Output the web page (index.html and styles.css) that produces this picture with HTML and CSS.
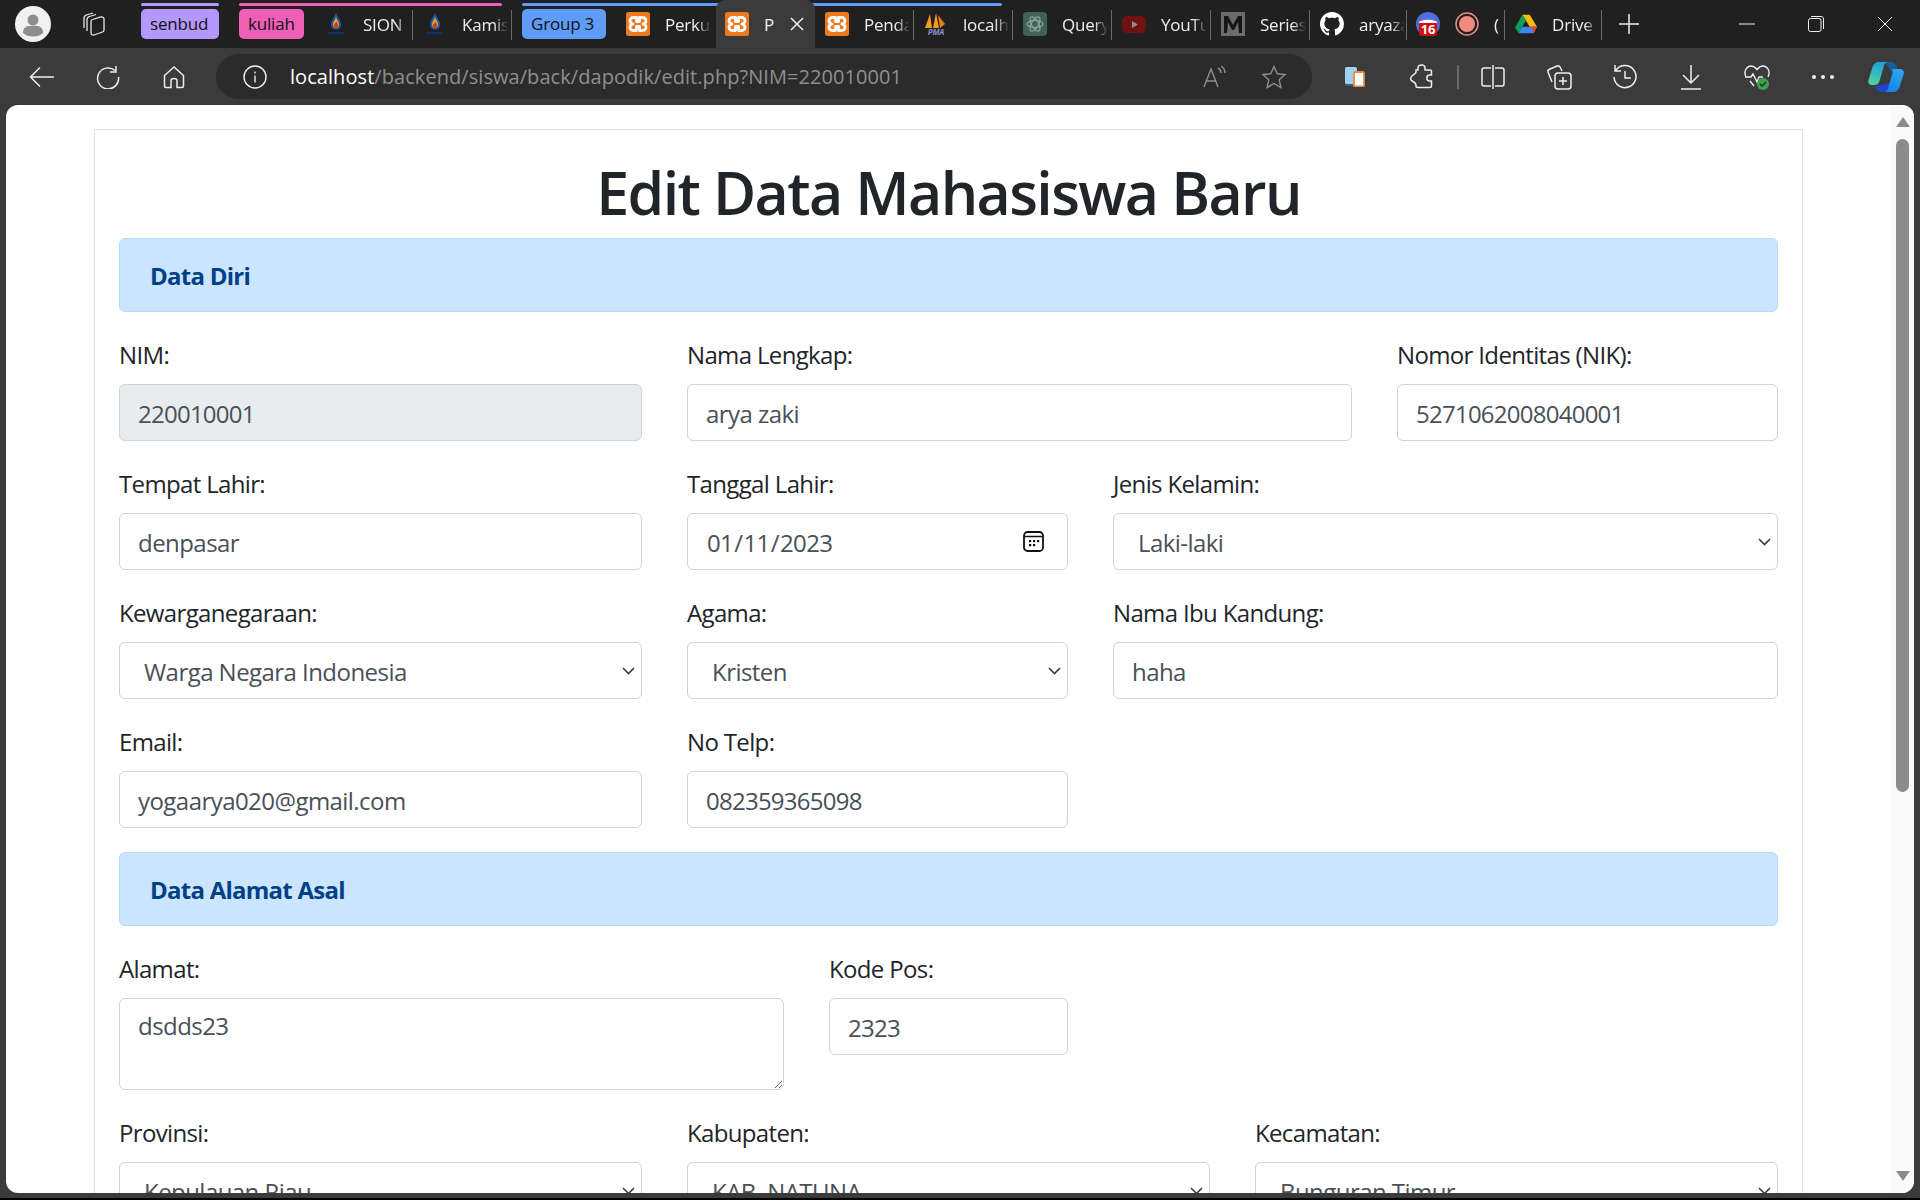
FILE: index.html
```html
<!DOCTYPE html>
<html lang="en">
<head>
    <meta charset="UTF-8">
    <meta name="viewport" content="width=device-width, initial-scale=1.0">
    <title>Edit Data Mahasiswa Baru</title>
    <link rel="stylesheet" href="styles.css">
</head>
<body>
    <svg class="defs" width="0" height="0">
        <symbol id="xampp" viewBox="0 0 24 24">
            <rect width="24" height="24" rx="2.500" fill="#ee7a1f"/>
            <g fill="none" stroke="#fff" stroke-width="2.800" stroke-linejoin="round">
                <path d="M10.500 5.500H7.500a3.200 3.200 0 0 0-.5 6.500 3.200 3.200 0 0 0 .5 6.500h3v-4h3v4h3a3.200 3.200 0 0 0 .5-6.500 3.200 3.200 0 0 0-.5-6.500h-3v4h-3z"/>
            </g>
        </symbol>
        <symbol id="flame" viewBox="0 0 24 24">
            <path d="M12 1c1 4 5 7 5 11.500 0 3-2 5-5 5s-5-2-5-5C7 8 11 5 12 1z" fill="#1f56ad"/>
            <path d="M12 5c.8 3 3 4.500 3 7.500 0 2-1.300 3.500-3 3.500s-3-1.500-3-3.500C9 9.500 11.400 8 12 5z" fill="#e9a21f"/>
            <path d="M12.500 9.500c.5 1.500 1.500 2.500 1.500 4 0 1.300-.9 2.500-2 2.500s-2-1.200-2-2.500c0-1.500 2-2.500 2.500-4z" fill="#c93a22"/>
            <rect x="4" y="20" width="16" height="2" fill="#14305f"/>
        </symbol>
    </svg>

    <div class="tabstrip">
        <div class="avatar">
            <svg viewBox="0 0 36 36" width="36" height="36"><circle cx="18" cy="18" r="18" fill="#f1f1f1"/><circle cx="18" cy="14" r="5.500" fill="#8d8d8d"/><path d="M8 27c0-5 3-7 6-7h8c3 0 6 2 6 7-2.500 2.500-6 3.500-10 3.500S10.500 29.500 8 27z" fill="#8d8d8d"/></svg>
        </div>
        <div class="workspaces">
            <svg viewBox="0 0 25 24" width="25" height="24" fill="none" stroke="#e8e8e8" stroke-width="1.300"><path d="M3 16V6c0-1.500 1-2.500 2.500-3L12 1M6 19V7.500C6 6 7 5 8.500 4.500L15 2.500"/><path d="M10 9.500c0-1 .6-1.700 1.500-2l8.500-2.500c1.500-.4 3 .5 3 2v11c0 1-.6 1.700-1.500 2l-8.500 3c-1.500.4-3-.5-3-2z"/></svg>
        </div>

        <div class="group group-purple">
            <span class="chip chip-purple">senbud</span>
        </div>

        <div class="group group-pink">
            <span class="chip chip-pink">kuliah</span>
            <div class="tab tab-sep"><svg class="fav" width="24" height="24"><use href="#flame"/></svg><span class="tab-title">SION</span></div>
            <div class="tab tab-sep"><svg class="fav" width="24" height="24"><use href="#flame"/></svg><span class="tab-title">Kamis</span></div>
        </div>

        <div class="group group-blue">
            <span class="chip chip-blue">Group 3</span>
            <div class="tab tab-plain"><svg class="fav" width="24" height="24"><use href="#xampp"/></svg><span class="tab-title">Perkuliahan</span></div>
            <div class="tab tab-active"><svg class="fav" width="24" height="24"><use href="#xampp"/></svg><span class="tab-title">P</span>
                <svg class="tab-close" viewBox="0 0 14 14" width="14" height="14" stroke="#fff" stroke-width="1.400"><path d="M1 1l12 12M13 1L1 13"/></svg>
            </div>
            <div class="tab tab-sep"><svg class="fav" width="24" height="24"><use href="#xampp"/></svg><span class="tab-title">Pendaftaran</span></div>
        </div>

        <div class="tab tab-sep">
            <svg class="fav" viewBox="0 0 24 24" width="24" height="24"><path d="M1 16L6 2l2 14zM9 16l3-15 3 15z" fill="#f39b1d"/><path d="M14 3l7 9-5 4z" fill="#e87f12"/><text x="12" y="23" class="pma">PMA</text></svg>
            <span class="tab-title">localhost</span>
        </div>
        <div class="tab tab-sep">
            <svg class="fav" viewBox="0 0 24 24" width="24" height="24"><rect width="24" height="24" rx="4" fill="#3f6157"/><g fill="none" stroke="#8ea59d" stroke-width="1.200"><ellipse cx="12" cy="12" rx="8" ry="3.600"/><ellipse cx="12" cy="12" rx="8" ry="3.600" transform="rotate(60 12 12)"/><ellipse cx="12" cy="12" rx="8" ry="3.600" transform="rotate(120 12 12)"/></g></svg>
            <span class="tab-title">Query Result</span>
        </div>
        <div class="tab tab-sep">
            <svg class="fav" viewBox="0 0 24 24" width="24" height="24"><rect y="4" width="24" height="17" rx="5" fill="#6e1212"/><path d="M10 9l6 3.500-6 3.500z" fill="#8f8f8f"/></svg>
            <span class="tab-title">YouTube</span>
        </div>
        <div class="tab tab-sep">
            <svg class="fav" viewBox="0 0 24 24" width="24" height="24"><rect width="24" height="24" fill="#6b6b6b"/><path d="M3 4h4l5 9 5-9h4v17h-3l-1-11-4 8h-2l-4-8-1 11H3z" fill="#161616"/></svg>
            <span class="tab-title">Series</span>
        </div>
        <div class="tab tab-sep tab-github">
            <svg class="fav" viewBox="0 0 16 16" width="24" height="24"><path fill="#fff" d="M8 0C3.580 0 0 3.580 0 8c0 3.540 2.290 6.530 5.470 7.590.4.07.55-.17.55-.38 0-.19-.01-.82-.01-1.490-2.010.37-2.530-.49-2.690-.94-.09-.23-.48-.94-.82-1.130-.28-.15-.68-.52-.01-.53.63-.01 1.080.58 1.230.82.72 1.210 1.870.87 2.330.66.07-.52.28-.87.51-1.070-1.780-.2-3.640-.89-3.640-3.950 0-.87.31-1.590.82-2.150-.08-.2-.36-1.020.08-2.120 0 0 .67-.21 2.200.82.64-.18 1.320-.27 2-.27.68 0 1.360.09 2 .27 1.530-1.040 2.200-.82 2.200-.82.44 1.100.16 1.920.08 2.120.51.56.82 1.270.82 2.150 0 3.070-1.870 3.750-3.650 3.950.29.25.54.73.54 1.480 0 1.070-.01 1.930-.01 2.200 0 .21.15.46.55.38A8.013 8.013 0 0016 8c0-4.420-3.580-8-8-8z"/></svg>
            <span class="tab-title">aryazaki</span>
        </div>
        <div class="tab-pair tab-sep">
            <svg class="fav" viewBox="0 0 24 24" width="24" height="24"><circle cx="12" cy="12" r="12" fill="#4f6fe0"/><rect x="3" y="8" width="18" height="16" rx="3" fill="#d40c0c"/><path d="M3 10c2-3 16-3 18 0v1H3z" fill="#fff"/><text x="12" y="22" class="badge-num">16</text></svg>
            <svg class="fav" viewBox="0 0 24 24" width="24" height="24"><circle cx="12" cy="12" r="11" fill="none" stroke="#ea8a80" stroke-width="1.500"/><circle cx="12" cy="12" r="8" fill="#f28b82"/></svg>
            <span class="tab-title tab-stub">(</span>
        </div>
        <div class="tab tab-sep tab-drive">
            <svg class="fav" viewBox="0 0 24 22" width="22" height="22"><path d="M8 1h8l8 13h-8z" fill="#fbbc04"/><path d="M8 1L0 15l4 6 8-14z" fill="#0f9d58"/><path d="M4 21h16l4-7H8z" fill="#4285f4"/><path d="M20 21l4-7h-6z" fill="#ea4335"/></svg>
            <span class="tab-title">Drive</span>
        </div>
        <svg class="new-tab" viewBox="0 0 22 22" width="22" height="22" stroke="#eee" stroke-width="1.500"><path d="M11 1v20M1 11h20"/></svg>

        <div class="win-controls">
            <svg viewBox="0 0 16 16" width="16" height="16" stroke="#eee" stroke-width="1"><path d="M0 8h16"/></svg>
            <svg viewBox="0 0 16 16" width="16" height="16" fill="none" stroke="#eee" stroke-width="1"><rect x=".5" y="2.500" width="12.500" height="13" rx="2"/><path d="M3 .5h10c1.500 0 2.500 1 2.500 2.500v10"/></svg>
            <svg viewBox="0 0 16 16" width="16" height="16" stroke="#eee" stroke-width="1"><path d="M1 1l14 14M15 1L1 15"/></svg>
        </div>
    </div>

    <div class="toolbar">
        <button class="tool"><svg viewBox="0 0 26 22" width="26" height="22" fill="none" stroke="#eee" stroke-width="1.500"><path d="M25 11H2M11 1.500L1.500 11l9.500 9.500"/></svg></button>
        <button class="tool"><svg viewBox="0 0 24 24" width="24" height="24" fill="none" stroke="#eee" stroke-width="1.500"><path d="M19 5.500A10.500 10.500 0 1 0 22.500 12M20 1v6h-6"/></svg></button>
        <button class="tool"><svg viewBox="0 0 24 24" width="24" height="24" fill="none" stroke="#eee" stroke-width="1.500"><path d="M12 2L2.500 10.500V21c0 1 .6 1.500 1.500 1.500h5v-7c0-1 1-2 3-2s3 1 3 2v7h5c1 0 1.500-.5 1.500-1.500V10.500z"/></svg></button>

        <div class="address">
            <svg class="info" viewBox="0 0 24 24" width="24" height="24" fill="none" stroke="#eee" stroke-width="1.400"><circle cx="12" cy="12" r="11"/><path d="M12 10.500v7M12 6.500v2"/></svg>
            <span class="url"><span class="url-host">localhost</span>/backend/siswa/back/dapodik/edit.php?NIM=220010001</span>
            <svg class="read" viewBox="0 0 26 24" width="26" height="24" fill="none" stroke="#8f8f8f" stroke-width="1.400"><path d="M2 22L9 4l7 18M4.500 16h9M16 3c2 1 3 3 3 5M19 1c2.500 1.500 4 4 4 7"/></svg>
            <svg class="star" viewBox="0 0 26 24" width="26" height="24" fill="none" stroke="#8f8f8f" stroke-width="1.400"><path d="M13 1.500l3.300 7.300 7.700.8-5.800 5.200 1.700 7.700-6.900-4-6.900 4 1.700-7.700L2 9.600l7.700-.8z"/></svg>
        </div>

        <button class="tool tool-first"><svg viewBox="0 0 20 20" width="20" height="20"><rect x="0" y="0" width="12" height="17" rx="1.500" fill="#9fd0f2"/><rect x="0" y="17" width="12" height="2" fill="#46586a"/><rect x="9" y="5" width="10" height="14.500" rx="1.500" fill="#fff" stroke="#e98c3a" stroke-width="1.800"/></svg></button>
        <button class="tool"><svg viewBox="0 0 24 26" width="24" height="26" fill="none" stroke="#eee" stroke-width="1.500"><path d="M9 4c0-4 7-4 7 0v2h5c1 0 1.500.5 1.500 1.500V11h-2c-3.500 0-3.500 6 0 6h2v5c0 1-.5 1.500-1.500 1.500H9c-1 0-2-.5-2-1.500v-1c0-3.500-5.500-3-5.500-6.500S7 11 7 8V6h2z"/></svg></button>
        <span class="tool-divider"></span>
        <button class="tool tool-tight"><svg viewBox="0 0 24 24" width="24" height="24" fill="none" stroke="#eee" stroke-width="1.500"><path d="M12 0v24M10 3H3C2 3 1 4 1 5v14c0 1 1 2 2 2h7M14 3h7c1 0 2 1 2 2v14c0 1-1 2-2 2h-7"/></svg></button>
        <button class="tool"><svg viewBox="0 0 26 26" width="26" height="26" fill="none" stroke="#eee" stroke-width="1.500"><path d="M6 18L2 8c-.4-1 0-2 1-2.500L11 2c1-.4 2 0 3 1l2 4"/><rect x="9" y="9" width="16" height="16" rx="3"/><path d="M17 13v8M13 17h8"/></svg></button>
        <button class="tool"><svg viewBox="0 0 26 26" width="26" height="26" fill="none" stroke="#eee" stroke-width="1.500"><path d="M3.500 7A11 11 0 1 1 2 13M3 1v6h6M13 7v7h6"/></svg></button>
        <button class="tool"><svg viewBox="0 0 22 26" width="22" height="26" fill="none" stroke="#eee" stroke-width="1.500"><path d="M11 1v17M3 11l8 8 8-8M1 25h20"/></svg></button>
        <button class="tool"><svg viewBox="0 0 26 26" width="26" height="26" fill="none"><path d="M2 13C-1 7 3 2 7 2c2.500 0 4.500 1.500 6 3.500C14.500 3.500 16.500 2 19 2c4 0 8 5 5 11M1 13h6l2-3 4 8 2-5h4M6 17l4 5" stroke="#eee" stroke-width="1.400"/><circle cx="19" cy="20" r="6" fill="#3f9f4c"/><path d="M16 20l2 2 4-4" stroke="#15301a" stroke-width="1.300"/></svg></button>
        <button class="tool"><span class="dots"><i></i><i></i><i></i></span></button>
        <button class="tool tool-copilot">
            <svg viewBox="0 0 36 32" width="36" height="32">
                <defs>
                    <linearGradient id="copLeft" x1="0.600" y1="0" x2="0.300" y2="1"><stop offset="0" stop-color="#1f9fe6"/><stop offset="1" stop-color="#4fd49a"/></linearGradient>
                    <linearGradient id="copRight" x1="0.700" y1="0" x2="0.300" y2="1"><stop offset="0" stop-color="#2ea6f2"/><stop offset="1" stop-color="#1583e8"/></linearGradient>
                </defs>
                <path d="M17 1h6c3 0 5 2 6 6l2 7-8-3z" fill="#17608f"/>
                <path d="M6 26l6 5h10c3 0 5-2 6-5l2-6z" fill="#1f45cf"/>
                <path d="M11 1h9c-2 0-3.500 1.500-4 3.500L11.500 20c-.7 2.500-2.500 4-5 4H4c-3 0-4.500-2.500-3.500-5l4-13C5.500 3 8 1 11 1z" fill="url(#copLeft)"/>
                <path d="M24 8h8c3 0 4.500 2.500 3.500 5.500l-4 12.500c-1 3-3.500 5-6.500 5h-9c2 0 3.500-1.500 4-3.500L24.500 12c.5-2 0-3-.5-4z" fill="url(#copRight)"/>
            </svg>
        </button>
    </div>

    <div class="viewport">
        <div class="page">
            <div class="container">
                <h1 class="title">Edit Data Mahasiswa Baru</h1>

                <div class="alert">Data Diri</div>
                <div class="form-grid">
                    <div class="field span-4"><label>NIM:</label><input class="control num" type="text" value="220010001" disabled></div>
                    <div class="field span-5"><label>Nama Lengkap:</label><input class="control" type="text" value="arya zaki"></div>
                    <div class="field span-3"><label>Nomor Identitas (NIK):</label><input class="control num" type="text" value="5271062008040001"></div>

                    <div class="field span-4"><label>Tempat Lahir:</label><input class="control" type="text" value="denpasar"></div>
                    <div class="field span-3"><label>Tanggal Lahir:</label><input class="control date" type="date" value="2023-01-11"></div>
                    <div class="field span-5"><label>Jenis Kelamin:</label><select class="control pick"><option>Laki-laki</option></select></div>

                    <div class="field span-4"><label>Kewarganegaraan:</label><select class="control pick"><option>Warga Negara Indonesia</option></select></div>
                    <div class="field span-3"><label>Agama:</label><select class="control pick"><option>Kristen</option></select></div>
                    <div class="field span-5"><label>Nama Ibu Kandung:</label><input class="control" type="text" value="haha"></div>

                    <div class="field span-4"><label>Email:</label><input class="control" type="text" value="yogaarya020@gmail.com"></div>
                    <div class="field span-3"><label>No Telp:</label><input class="control num" type="text" value="082359365098"></div>
                </div>

                <div class="alert">Data Alamat Asal</div>
                <div class="form-grid">
                    <div class="field span-5"><label>Alamat:</label><textarea class="control area">dsdds23</textarea></div>
                    <div class="field span-2"><label>Kode Pos:</label><input class="control num" type="text" value="2323"></div>
                    <div class="field span-5"></div>

                    <div class="field span-4"><label>Provinsi:</label><select class="control pick"><option>Kepulauan Riau</option></select></div>
                    <div class="field span-4"><label>Kabupaten:</label><select class="control pick"><option>KAB. NATUNA</option></select></div>
                    <div class="field span-4"><label>Kecamatan:</label><select class="control pick"><option>Bunguran Timur</option></select></div>
                </div>
            </div>
        </div>
        <div class="scrollbar">
            <span class="arrow arrow-up"></span>
            <span class="thumb"></span>
            <span class="arrow arrow-down"></span>
        </div>
    </div>
    <div class="bottom-edge"></div>
</body>
</html>
```

FILE: styles.css
```css
*{
    box-sizing: border-box;
}
html, body{
    height: 100%;
}
body{
    margin: 0;
    height: 1200px;
    overflow: hidden;
    display: flex;
    flex-direction: column;
    background-color: #3b3b3b;
    font-family: 'Open Sans', 'Noto Sans', sans-serif;
    color: #212529;
}
.defs{
    position: absolute;
}

/* tab strip */
.tabstrip{
    height: 48px;
    flex: none;
    display: flex;
    align-items: center;
    padding-left: 15px;
    background-color: #202020;
    color: #eee;
    font-size: 17px;
    letter-spacing: -0.2px;
}
.avatar{
    width: 36px;
    height: 36px;
    margin-right: 30px;
}
.workspaces{
    width: 25px;
    height: 24px;
    margin-right: 35px;
}
.group{
    position: relative;
    height: 48px;
    display: flex;
    align-items: center;
    margin-right: 20px;
}
.group::before{
    content: "";
    position: absolute;
    left: 0;
    right: 0;
    top: 3px;
    height: 3px;
    border-radius: 2px;
}
.group-purple::before{ background-color: #b497ff; }
.group-pink::before{ background-color: #ee5fb7; right: 10px; }
.group-blue::before{ background-color: #5f9cf9; right: -88px; }
.group-pink{ margin-right: 10px; }
.group-blue{ margin-right: 0; }
.chip{
    height: 30px;
    line-height: 29px;
    padding: 0 9px;
    border-radius: 5px;
    color: #111;
    white-space: nowrap;
}
.chip-purple{ background-color: #b497ff; width: 78px; }
.chip-pink{ background-color: #ee5fb7; width: 65px; margin-right: 10px; }
.chip-blue{ background-color: #5f9cf9; width: 84px; margin-right: 10px; }
.tab{
    position: relative;
    width: 99px;
    height: 48px;
    flex: none;
    display: flex;
    align-items: center;
    padding-left: 10px;
}
.tab-sep::after{
    content: "";
    position: absolute;
    right: 0;
    top: 10px;
    height: 30px;
    width: 1px;
    background-color: #6a6a6a;
}
.fav{
    flex: none;
}
.tab-title{
    margin-left: 15px;
    width: 46px;
    overflow: hidden;
    white-space: nowrap;
    -webkit-mask-image: linear-gradient(to right, #000 70%, transparent 100%);
    mask-image: linear-gradient(to right, #000 70%, transparent 100%);
}
.tab-plain{
    margin-right: 1px;
}
.tab-active{
    background-color: #3b3b3b;
    border-radius: 9px 9px 0 0;
    padding-left: 9px;
    width: 99px;
}
.tab-active .tab-title{
    width: 14px;
    -webkit-mask-image: none;
    mask-image: none;
}
.tab-close{
    margin-left: 12px;
}
.tab-github{
    width: 97px;
}
.tab-pair{
    position: relative;
    width: 98px;
    height: 48px;
    flex: none;
    display: flex;
    align-items: center;
    padding-left: 9px;
    gap: 15px;
}
.tab-stub{
    margin-left: 0;
    width: 10px;
}
.tab-drive{
    width: 97px;
    padding-left: 10px;
}
.new-tab{
    margin-left: 16px;
}
.win-controls{
    margin-left: auto;
    display: flex;
    align-items: center;
    gap: 53px;
    padding-right: 27px;
}
.pma{
    font-size: 8px;
    font-style: italic;
    font-weight: 700;
    fill: #8b8fc9;
    text-anchor: middle;
}
.badge-num{
    font-size: 13px;
    font-weight: 700;
    fill: #fff;
    text-anchor: middle;
}

/* toolbar */
.toolbar{
    height: 57px;
    flex: none;
    display: flex;
    align-items: center;
    padding-left: 9px;
    background-color: #3b3b3b;
}
.tool{
    width: 66px;
    height: 46px;
    flex: none;
    display: flex;
    align-items: center;
    justify-content: center;
    padding: 0;
    border: none;
    background: none;
}
.tool-first{
    margin-left: 10px;
}
.tool-tight{
    margin-left: 0;
}
.tool-divider{
    width: 2px;
    height: 24px;
    margin: 0 1px 0 3px;
    background-color: #6a6a6a;
}
.tool-copilot{
    width: 60px;
}
.address{
    width: 1096px;
    height: 45px;
    margin-left: 9px;
    flex: none;
    display: flex;
    align-items: center;
    padding: 0 25px 0 27px;
    border-radius: 23px;
    background-color: #2b2b2b;
}
.url{
    margin-left: 23px;
    font-size: 20px;
    letter-spacing: 0.06px;
    color: #8f8f8f;
    white-space: nowrap;
}
.url-host{
    color: #fff;
}
.read{
    margin-left: auto;
}
.star{
    margin-left: 33px;
}
.dots{
    display: flex;
    gap: 5px;
}
.dots i{
    width: 4px;
    height: 4px;
    border-radius: 50%;
    background-color: #eee;
}

/* viewport */
.viewport{
    height: 1088px;
    flex: none;
    margin: 0 6px;
    display: flex;
    overflow: hidden;
    border-radius: 12px;
    background-color: #fff;
}
.page{
    flex: 1;
    min-width: 0;
    overflow: hidden;
    padding: 24px 88px 0;
}
.scrollbar{
    width: 23px;
    flex: none;
    display: flex;
    flex-direction: column;
    align-items: center;
    padding: 12px 0;
    background-color: #fafafa;
}
.thumb{
    width: 13px;
    height: 653px;
    margin-top: 12px;
    border-radius: 7px;
    background-color: #8b8b8b;
}
.arrow{
    width: 0;
    height: 0;
    border-left: 7px solid transparent;
    border-right: 7px solid transparent;
}
.arrow-up{
    border-bottom: 10px solid #8b8b8b;
}
.arrow-down{
    margin-top: auto;
    border-top: 10px solid #8b8b8b;
}
.bottom-edge{
    flex: 1;
    border-bottom: 2px solid #000;
    background-color: #3b3b3b;
}

/* form */
.container{
    border: 1px solid #dee2e6;
    padding: 24px 24px 0;
    height: 1200px;
}
.title{
    height: 72px;
    margin: 0 0 12px;
    font-size: 59px;
    font-weight: 600;
    line-height: 76px;
    letter-spacing: -1.6px;
    text-align: center;
    color: #212529;
}
.alert{
    height: 74px;
    padding: 0 30px;
    margin-bottom: 24px;
    display: flex;
    align-items: center;
    border: 1px solid #b8daff;
    border-radius: 6px;
    background-color: #cce5ff;
    color: #004085;
    font-size: 24px;
    font-weight: 700;
    letter-spacing: -0.75px;
}
.form-grid{
    display: grid;
    grid-template-columns: repeat(12, 1fr);
    column-gap: 45px;
}
.field{
    margin-bottom: 24px;
    min-width: 0;
}
.span-2{ grid-column: span 2; }
.span-3{ grid-column: span 3; }
.span-4{ grid-column: span 4; }
.span-5{ grid-column: span 5; }
.field label{
    display: block;
    height: 36px;
    margin-bottom: 12px;
    font-size: 24px;
    line-height: 38px;
    letter-spacing: -0.65px;
}
.control{
    display: block;
    width: 100%;
    height: 57px;
    padding: 10px 18px 8px;
    border: 1px solid #ced4da;
    border-radius: 6px;
    background-color: #fff;
    font-family: inherit;
    font-size: 24px;
    letter-spacing: -0.55px;
    color: #495057;
}
.control:disabled{
    background-color: #e9ecef;
    opacity: 1;
}
.num{
    letter-spacing: -0.75px;
}
.date{
    letter-spacing: -0.6px;
}
.date::-webkit-calendar-picker-indicator{
    width: 21px;
    height: 21px;
    padding: 0;
    margin: -3px 5px 0 0;
    background: url("data:image/svg+xml,%3Csvg xmlns='http://www.w3.org/2000/svg' viewBox='0 0 21 21'%3E%3Crect x='1' y='1' width='19' height='19' rx='3.500' fill='none' stroke='%23111' stroke-width='1.800'/%3E%3Cpath d='M1 5.500h19' stroke='%23111' stroke-width='1.400'/%3E%3Cg fill='%23111'%3E%3Crect x='6' y='9' width='2.200' height='2.200'/%3E%3Crect x='10' y='9' width='2.200' height='2.200'/%3E%3Crect x='14' y='9' width='2.200' height='2.200'/%3E%3Crect x='6' y='13' width='2.200' height='2.200'/%3E%3Crect x='10' y='13' width='2.200' height='2.200'/%3E%3C/g%3E%3C/svg%3E") no-repeat center;
}
.pick{
    appearance: none;
    padding-left: 24px;
    background: #fff url("data:image/svg+xml,%3Csvg xmlns='http://www.w3.org/2000/svg' viewBox='0 0 13 8'%3E%3Cpath d='M1 1l5.500 5.500L12 1' fill='none' stroke='%23343a40' stroke-width='1.600'/%3E%3C/svg%3E") no-repeat right 6px top 24px / 13px 8px;
}
.area{
    height: 92px;
    padding-top: 10px;
    resize: vertical;
}
```
